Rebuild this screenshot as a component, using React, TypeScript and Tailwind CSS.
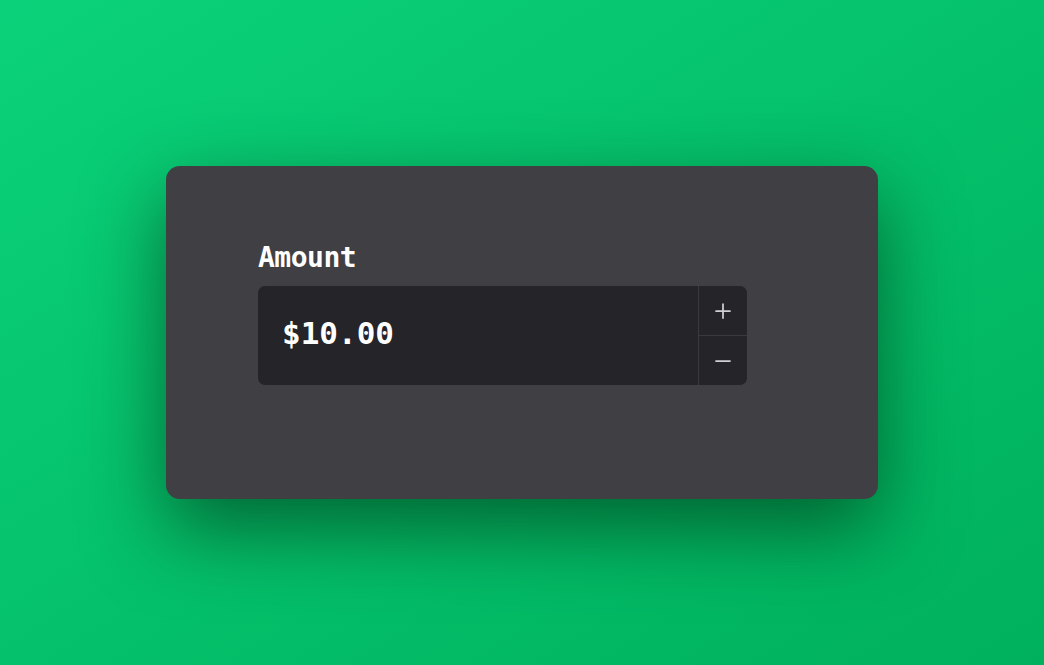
import { Plus, Minus } from 'lucide-react';

export default function App() {
  return (
    <div className="h-[665px] w-full bg-linear-to-br from-[#0bd27a] to-[#00b05c] flex items-center justify-center">
      <div className="w-[712px] h-[333px] rounded-[14px] bg-[#403f44] shadow-[0_30px_80px_rgba(0,40,15,0.6)] pl-[92px] pt-[72px]">
        <label
          className="block text-[28px] leading-[40px] font-bold text-white tracking-[-0.5px]"
          style={{ fontFamily: '"DejaVu Sans Mono", "Liberation Mono", monospace' }}
        >
          Amount
        </label>
        <div className="mt-[8px] w-[489px] h-[99px] flex rounded-[7px] bg-[#252428] overflow-hidden">
          <div
            className="flex-1 flex items-center pl-[24px] pb-[4px] text-[31px] font-bold text-white"
            style={{ fontFamily: '"DejaVu Sans Mono", "Liberation Mono", monospace' }}
          >
            $10.00
          </div>
          <div className="w-[49px] flex flex-col border-l border-[#3a393e]">
            <button className="flex-1 flex items-center justify-center text-[#d0cfd3] border-b border-[#3a393e]">
              <Plus className="h-[24px] w-[24px]" strokeWidth={1.75} />
            </button>
            <button className="flex-1 flex items-center justify-center text-[#d0cfd3]">
              <Minus className="h-[24px] w-[24px]" strokeWidth={1.75} />
            </button>
          </div>
        </div>
      </div>
    </div>
  );
}
